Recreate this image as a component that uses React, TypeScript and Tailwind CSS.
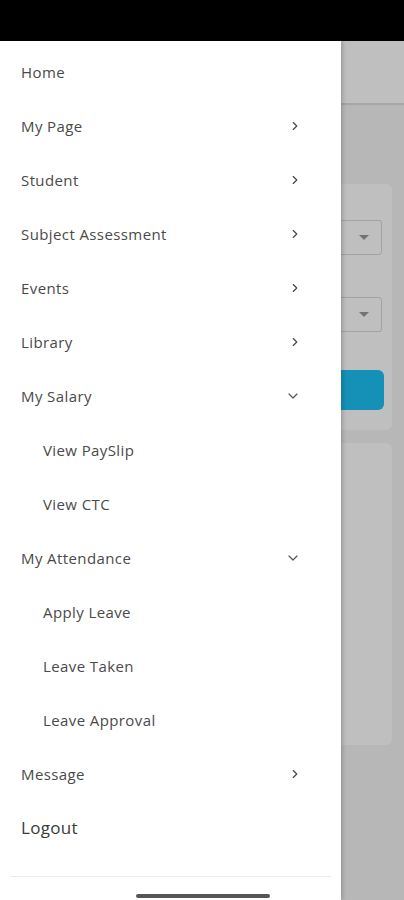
import { ChevronRight, ChevronDown } from 'lucide-react';

type Item = {
  label: string;
  icon?: 'right' | 'down';
  sub?: boolean;
};

const items: Item[] = [
  { label: 'Home' },
  { label: 'My Page', icon: 'right' },
  { label: 'Student', icon: 'right' },
  { label: 'Subject Assessment', icon: 'right' },
  { label: 'Events', icon: 'right' },
  { label: 'Library', icon: 'right' },
  { label: 'My Salary', icon: 'down' },
  { label: 'View PaySlip', sub: true },
  { label: 'View CTC', sub: true },
  { label: 'My Attendance', icon: 'down' },
  { label: 'Apply Leave', sub: true },
  { label: 'Leave Taken', sub: true },
  { label: 'Leave Approval', sub: true },
  { label: 'Message', icon: 'right' },
];

function Dropdown() {
  return (
    <div className="h-[35px] ml-3 mr-[10px] rounded-[3px] border border-[#d8d8d8] bg-white flex items-center justify-end pr-3">
      <div className="w-0 h-0 border-l-[5px] border-r-[5px] border-t-[5px] border-l-transparent border-r-transparent border-t-[#999]" />
    </div>
  );
}

function Background() {
  return (
    <div className="h-[859px] bg-[#f4f4f4] flex flex-col">
      <div className="h-[64px] bg-white border-b-2 border-[#dedede]" />
      <div className="mt-[79px] mx-3 bg-white rounded-md pt-[36px] pb-[20px] flex flex-col">
        <Dropdown />
        <div className="h-[42px]" />
        <Dropdown />
        <div className="h-[38px]" />
        <div className="h-[40px] ml-5 mr-2 rounded-md bg-[#1cc0f5]" />
      </div>
      <div className="mt-[13px] mx-3 h-[302px] bg-white rounded-md" />
    </div>
  );
}

export default function App() {
  return (
    <div className="w-[404px] h-[900px] overflow-hidden bg-white flex flex-col" style={{ fontFamily: '"Open Sans", "Noto Sans", sans-serif' }}>
      <div className="h-[41px] bg-black shrink-0" />
      <div className="relative flex-1">
        <Background />
        <div className="absolute inset-0 bg-black/25" />
        <div className="absolute left-0 top-0 bottom-0 w-[341px] bg-white shadow-[2px_0_4px_rgba(0,0,0,0.18)] flex flex-col">
          <div className="pt-[4px] flex flex-col">
            {items.map((it) => (
              <div
                key={it.label}
                className={`h-[54px] flex items-center justify-between pr-[40px] ${it.sub ? 'pl-[43px]' : 'pl-[21px]'}`}
              >
                <span className="text-[15px] tracking-[0.4px] text-[#4a4a4a]">{it.label}</span>
                {it.icon === 'right' && <ChevronRight size={14} strokeWidth={2} className="text-[#444] -mr-[1px]" />}
                {it.icon === 'down' && <ChevronDown size={16} strokeWidth={1.8} className="text-[#555]" />}
              </div>
            ))}
            <div className="h-[54px] flex items-center pl-[21px]">
              <span className="text-[17px] tracking-[0.3px] text-[#3a3a3a]">Logout</span>
            </div>
          </div>
          <div className="mt-[21px] mx-[10px] h-px bg-[#ececec]" />
          <div className="flex-1 flex items-end justify-center pb-[2px]">
            <div className="w-[134px] h-[4px] rounded-full bg-[#555] ml-[64px]" />
          </div>
        </div>
      </div>
    </div>
  );
}
